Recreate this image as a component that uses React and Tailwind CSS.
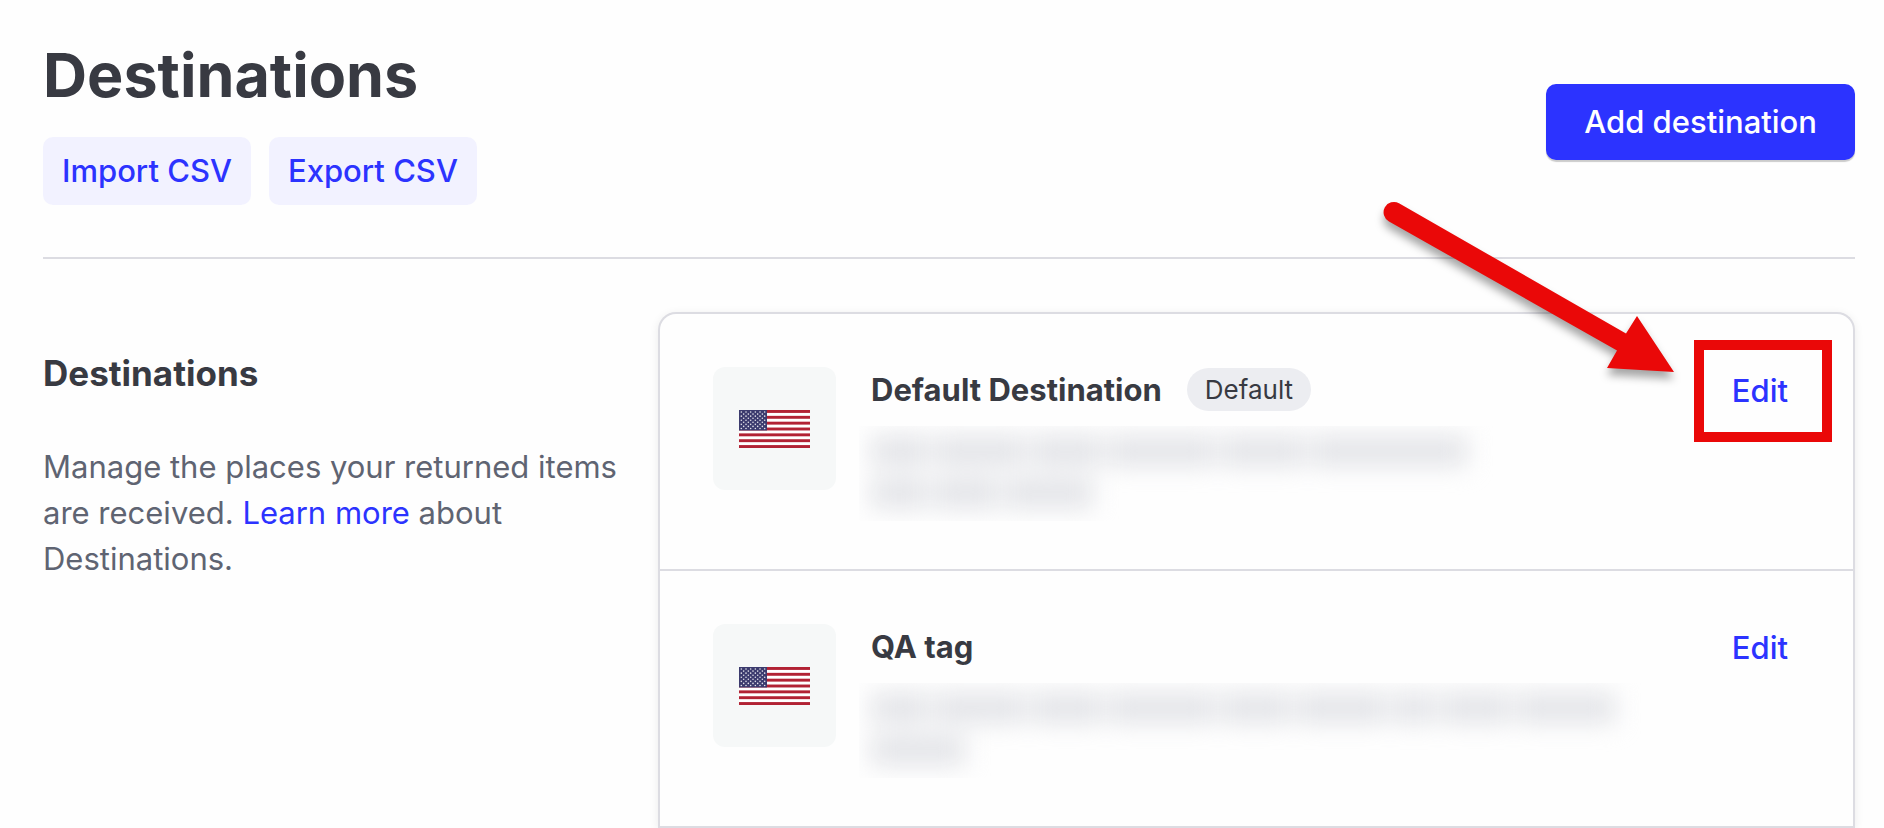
import React from "react";

const stripes = [0, 2, 4, 6, 8, 10, 12];
const starRows = [0, 1, 2, 3, 4, 5, 6, 7, 8];

function Flag() {
  return (
    <svg viewBox="0 0 71 38" className="h-[38px] w-[71px]" role="img" aria-label="United States">
      <rect width="71" height="38" fill="#fff" />
      {stripes.map((i) => (
        <rect key={i} y={(i * 38) / 13} width="71" height={38 / 13} fill="#b22234" />
      ))}
      <rect width="28" height="20.46" fill="#3c3b6e" />
      {starRows.map((r) =>
        Array.from({ length: r % 2 ? 5 : 6 }, (_, c) => (
          <circle
            key={`${r}-${c}`}
            cx={2.33 + c * 4.67 + (r % 2 ? 2.33 : 0)}
            cy={2.05 + r * 2.05}
            r="0.8"
            fill="#fff"
            fillOpacity="0.85"
          />
        ))
      )}
    </svg>
  );
}

function RedactedAddress({ lines }) {
  return (
    <div className="mt-[14px] -ml-3 h-[95px] overflow-hidden pt-1 pl-3" aria-hidden="true">
      <div className="flex flex-col blur-[12px]">
        {lines.map((words, i) => (
          <div key={i} className="flex h-[42px] items-center gap-1.5">
            {words.map((w, j) => (
              <span key={j} className="h-[30px] bg-[#e3e4e8]" style={{ width: w }} />
            ))}
          </div>
        ))}
      </div>
    </div>
  );
}

const destinations = [
  {
    name: "Default Destination",
    isDefault: true,
    highlighted: true,
    lines: [[58, 90, 72, 106, 84, 156], [56, 66, 88]],
  },
  {
    name: "QA tag",
    lines: [[58, 90, 72, 106, 70, 90, 42, 70, 98], [94]],
  },
];

function Arrow() {
  return (
    <svg
      viewBox="0 0 300 184"
      className="pointer-events-none absolute -top-[114px] right-[173px] h-[184px] w-[300px] drop-shadow-[0_7px_4px_rgba(0,0,0,0.35)]"
      aria-hidden="true"
    >
      <path
        d="M19 3.2 L246 133.5 L257 116 L294 172 L227 168 L237 150.5 L9 21.5 A10 10 0 0 1 19 3.2 Z"
        fill="#ea0808"
      />
    </svg>
  );
}

function DestinationRow({ item }) {
  return (
    <li className="relative flex gap-[35px] border-b-2 border-[#dcdce2] px-[53px] pt-[53px] pb-12">
      <div className="flex size-[123px] shrink-0 items-center justify-center rounded-xl bg-[#f6f8f8]">
        <Flag />
      </div>
      <div className="min-w-0 flex-1">
        <div className="flex h-[45px] items-center gap-[25px]">
          <h3 className="text-[31px] leading-[45px] font-bold">{item.name}</h3>
          {item.isDefault && (
            <span className="rounded-full bg-[#ecedf1] px-[18px] text-[26px] leading-[43px]">Default</span>
          )}
        </div>
        <RedactedAddress lines={item.lines} />
      </div>
      <div className="relative h-12 px-3 leading-[48px]">
        <button type="button" className="text-[31px] font-medium text-[#2c33ff]">
          Edit
        </button>
        {item.highlighted && (
          <span className="pointer-events-none absolute -top-[27px] -right-8 -left-[26px] h-[102px] border-[10px] border-[#ea0808]" />
        )}
      </div>
      {item.highlighted && <Arrow />}
    </li>
  );
}

export default function App() {
  return (
    <div className="min-h-screen overflow-hidden bg-[#fefefe] pr-[29px] pl-[43px] font-['Inter',sans-serif] text-[#383a42]">
      <header className="flex items-start justify-between border-b-2 border-[#dcdce2] pb-[52px]">
        <div>
          <h1 className="pt-10 text-[61px] leading-[70px] font-bold">Destinations</h1>
          <div className="mt-[27px] flex gap-[18px]">
            {["Import CSV", "Export CSV"].map((label) => (
              <button
                key={label}
                type="button"
                className="h-[68px] rounded-[10px] bg-[#f2f2ff] px-[19px] text-[31px] font-medium text-[#2c33ff]"
              >
                {label}
              </button>
            ))}
          </div>
        </div>
        <button
          type="button"
          className="mt-[84px] h-[76px] rounded-[10px] bg-[#2c33ff] px-[38px] text-[31px] font-medium text-white shadow-[0_2px_1px_rgba(0,0,0,0.2)]"
        >
          Add destination
        </button>
      </header>

      <main className="flex items-start">
        <section className="w-[615px] shrink-0 pt-[92px] pr-2">
          <h2 className="text-[35px] leading-[44px] font-bold">Destinations</h2>
          <p className="mt-[49px] text-[31px] leading-[46px] text-[#5f6472]">
            Manage the places your returned items are received.{" "}
            <a href="#learn-more" className="text-[#2c33ff]">
              Learn more
            </a>{" "}
            about Destinations.
          </p>
        </section>
        <ul className="mt-[53px] min-w-0 flex-1 rounded-t-[18px] border-2 border-b-0 border-[#dcdce2] bg-[#fefefe] shadow-[0_2px_10px_rgba(0,0,0,0.08)]">
          {destinations.map((item) => (
            <DestinationRow key={item.name} item={item} />
          ))}
        </ul>
      </main>
    </div>
  );
}
